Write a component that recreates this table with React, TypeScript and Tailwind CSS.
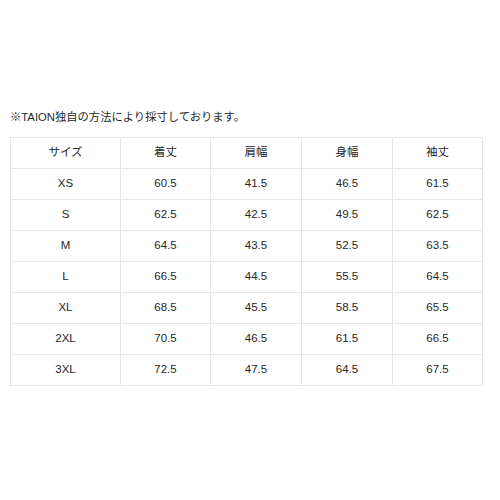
const HEAD = ["サイズ", "着丈", "肩幅", "身幅", "袖丈"];

const ROWS: [string, string, string, string, string][] = [
  ["XS", "60.5", "41.5", "46.5", "61.5"],
  ["S", "62.5", "42.5", "49.5", "62.5"],
  ["M", "64.5", "43.5", "52.5", "63.5"],
  ["L", "66.5", "44.5", "55.5", "64.5"],
  ["XL", "68.5", "45.5", "58.5", "65.5"],
  ["2XL", "70.5", "46.5", "61.5", "66.5"],
  ["3XL", "72.5", "47.5", "64.5", "67.5"],
];

const WIDTHS = ["w-[110px]", "w-[90px]", "w-[91px]", "w-[91px]", "w-[90px]"];

export default function App() {
  return (
    <div className="h-[500px] w-[500px] bg-white px-[10px] pt-[109px] font-['Liberation_Sans','Noto_Sans_CJK_JP',sans-serif] text-[#282828]">
      <p className="text-[11.3px] leading-[16px]">※TAION独自の方法により採寸しております。</p>
      <table className="mt-[12px] w-[472px] table-fixed border-collapse text-[11.5px]">
        <thead>
          <tr>
            {HEAD.map((h, i) => (
              <th key={h} className={`${WIDTHS[i]} h-[31px] border border-[#e6e6e6] p-0 text-center font-normal`}>
                {h}
              </th>
            ))}
          </tr>
        </thead>
        <tbody>
          {ROWS.map((r) => (
            <tr key={r[0]}>
              {r.map((v, i) => (
                <td key={i} className="h-[31px] border border-[#e6e6e6] p-0 text-center">
                  {v}
                </td>
              ))}
            </tr>
          ))}
        </tbody>
      </table>
    </div>
  );
}
